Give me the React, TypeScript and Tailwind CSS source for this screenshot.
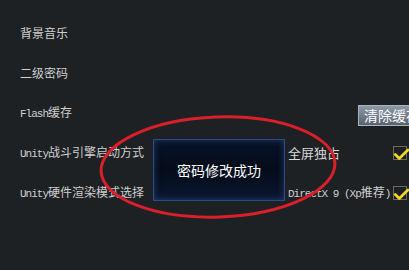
const rows = [
  { en: "", zh: "背景音乐" },
  { en: "", zh: "二级密码" },
  { en: "Flash", zh: "缓存" },
  { en: "Unity", zh: "战斗引擎启动方式" },
  { en: "Unity", zh: "硬件渲染模式选择" },
];

const mono = "font-['Liberation_Mono',monospace] text-[11px] tracking-[-1px]";

function Check() {
  return (
    <span className="relative inline-block h-[14px] w-[14px] shrink-0 border border-[#6b6b60] bg-[#1c1e20]">
      <svg viewBox="0 0 14 14" className="absolute -left-[1px] -top-[1px] h-[16px] w-[16px]">
        <path d="M2 7.5 L5.5 11 L13 3.5" fill="none" stroke="#f2d625" strokeWidth="2.4" strokeLinecap="round" strokeLinejoin="round" />
      </svg>
    </span>
  );
}

export default function App() {
  return (
    <div className="relative h-[270px] w-[409px] overflow-hidden bg-[#1e2124] font-['Noto_Sans_CJK_SC',sans-serif] text-[12px] text-[#cfcfcf]">
      <div className="flex flex-col pt-[13px]">
        {rows.map((r, i) => (
          <div key={i} className="flex h-10 items-center pl-5">
            <span className="w-[268px] shrink-0 whitespace-nowrap">
              {r.en && <span className={mono}>{r.en}</span>}
              {r.zh}
            </span>
            {i === 2 && (
              <button className="ml-[70px] mt-[5px] h-[21px] w-[70px] shrink-0 whitespace-nowrap border border-[#a9b4bf] bg-gradient-to-b from-[#8d9aa6] to-[#56636f] pl-[5px] text-left text-[14px] leading-[19px] text-white">
                清除缓存
              </button>
            )}
            {i === 3 && (
              <div className="flex items-center">
                <span className="w-[105px] whitespace-nowrap text-[13px] text-[#d8d8d8]">全屏独占</span>
                <span className="mt-[3px]"><Check /></span>
              </div>
            )}
            {i === 4 && (
              <div className="flex items-center">
                <span className="w-[105px] whitespace-nowrap">
                  <span className={mono}>DirectX 9 (Xp</span>推荐<span className={mono}>)</span>
                </span>
                <Check />
              </div>
            )}
          </div>
        ))}
      </div>

      <div className="absolute left-[153px] top-[139px] flex h-[62px] w-[132px] items-center justify-center border border-[#2c4a86] bg-gradient-to-b from-[#071226] via-[#050d1a] to-[#0a1630] shadow-[inset_0_0_6px_rgba(60,100,180,0.5)]">
        <span className="text-[14px] text-white">密码修改成功</span>
      </div>

      <svg className="pointer-events-none absolute left-0 top-0" width="409" height="270">
        <ellipse cx="218" cy="167" rx="117" ry="50" fill="none" stroke="#d81f2a" strokeWidth="3" transform="rotate(-2 218 167)" />
      </svg>
    </div>
  );
}
